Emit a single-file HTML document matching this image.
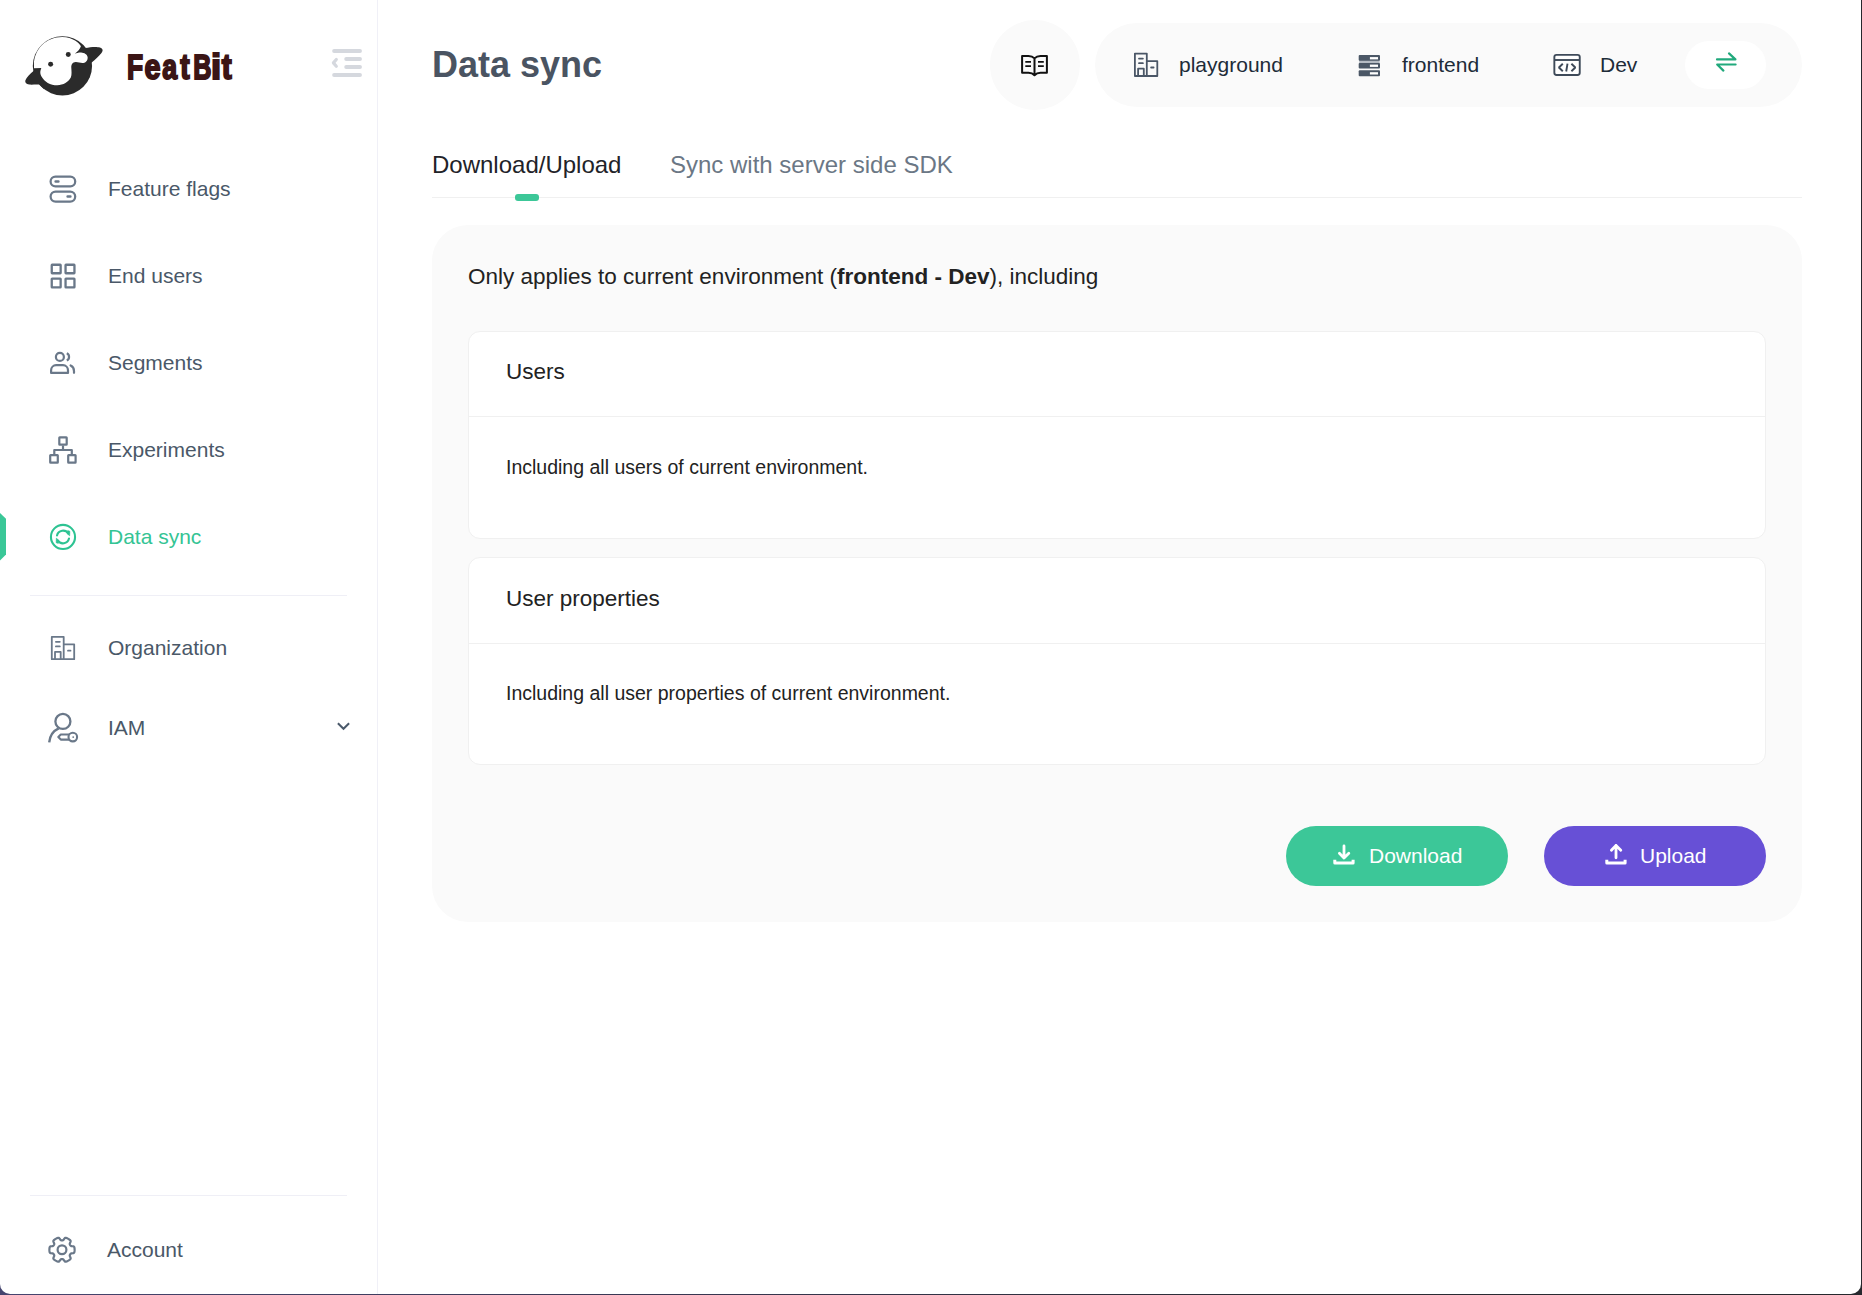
<!DOCTYPE html>
<html lang="en">
<head>
<meta charset="utf-8">
<title>FeatBit - Data sync</title>
<style>
*{box-sizing:border-box;margin:0;padding:0}
html,body{width:1862px;height:1295px;overflow:hidden;background:#2b2d34}
body{background:linear-gradient(90deg,#46456f 0%,#3d3c5c 25%,#34344a 45%,#2a2c34 70%,#26282d 100%);font-family:"Liberation Sans",sans-serif;color:#23282e;position:relative}
.abs{position:absolute}
/* sidebar */
#side{position:absolute;left:0;top:0;width:378px;height:1294px;border-right:1px solid #f0f0f7}
.mi{position:absolute;left:0;width:376px;height:60px;font-size:21px;line-height:60px;color:#4a5868}
.mi svg{position:absolute;left:47px;top:14px;width:32px;height:32px}
.mi span{position:absolute;left:108px;top:0;white-space:nowrap}
.mi.act{color:#34c494}
.hr{position:absolute;left:30px;width:317px;height:1px;background:#efeff6}
#actbar{position:absolute;left:0;top:513px;width:6px;height:47.6px;background:#3ac797;clip-path:polygon(0 0,100% 5.7px,100% calc(100% - 6px),0 100%)}
#win{position:absolute;left:0;top:0;width:1861px;height:1294px;background:#fff;border-radius:0 0 10px 10px}
/* header */
#title{position:absolute;left:432px;top:41px;font-size:36px;line-height:48px;font-weight:bold;color:#4a5462;white-space:nowrap}
#doc{position:absolute;left:990px;top:20px;width:90px;height:90px;border-radius:45px;background:#fafafa}
#pill{position:absolute;left:1095px;top:23px;width:707px;height:84px;border-radius:42px;background:#fafafa}
.pt{position:absolute;top:50px;font-size:21px;line-height:30px;color:#202b38;white-space:nowrap}
#swap{position:absolute;left:1685px;top:40.7px;width:81.2px;height:48.7px;border-radius:24.4px;background:#fff}
/* tabs */
.tab{position:absolute;top:148px;font-size:24px;line-height:34px;white-space:nowrap}
#tabline{position:absolute;left:432px;top:197px;width:1370px;height:1px;background:#f0f0f0}
#ink{position:absolute;left:515px;top:194px;width:24px;height:7px;border-radius:3px;background:#3cc798}
/* panel */
#panel{position:absolute;left:432px;top:225px;width:1370px;height:697px;border-radius:36px;background:#fafafa}
#lead{position:absolute;left:468px;top:260px;font-size:22.5px;line-height:34px;color:#222;white-space:nowrap}
.card{position:absolute;left:468px;width:1298px;height:208px;background:#fff;border:1px solid #f0f0f0;border-radius:12px}
.card h3{position:absolute;left:37px;top:23px;font-size:22.5px;line-height:34px;font-weight:normal;color:#222;white-space:nowrap}
.card .div{position:absolute;left:0;top:84px;width:1296px;height:1px;background:#f0f0f0}
.card p{position:absolute;left:37px;top:120px;font-size:19.5px;line-height:30px;color:#222;white-space:nowrap}
.btn{position:absolute;top:826px;width:222px;height:60px;border-radius:30px;color:#fff;font-size:21px;line-height:60px}
.btn span{position:absolute;top:0;white-space:nowrap}
.btn svg{position:absolute}
</style>
</head>
<body>
<div id="win"></div>
<div id="side">
  <svg id="brand" width="260" height="110" viewBox="0 0 260 110" style="position:absolute;left:0;top:0"><text y="78.7" font-family="Liberation Sans, sans-serif" font-weight="bold" font-size="35.2" fill="#3b1515" stroke="#3b1515" stroke-width="2.0" stroke-linejoin="miter"><tspan x="127.04" textLength="16.08" lengthAdjust="spacingAndGlyphs">F</tspan><tspan x="144.49" textLength="15.97" lengthAdjust="spacingAndGlyphs">e</tspan><tspan x="162.18" textLength="14.89" lengthAdjust="spacingAndGlyphs">a</tspan><tspan x="180.36" textLength="9.39" lengthAdjust="spacingAndGlyphs">t</tspan><tspan x="193.13" textLength="18.20" lengthAdjust="spacingAndGlyphs">B</tspan><tspan x="210.99" textLength="10.17" lengthAdjust="spacingAndGlyphs">i</tspan><tspan x="221.68" textLength="9.93" lengthAdjust="spacingAndGlyphs">t</tspan></text></svg>
  <div id="actbar"></div>
  <div class="mi" style="top:159px"><span>Feature flags</span></div>
  <div class="mi" style="top:246px"><span>End users</span></div>
  <div class="mi" style="top:333px"><span>Segments</span></div>
  <div class="mi" style="top:420px"><span>Experiments</span></div>
  <div class="mi act" style="top:507px"><span>Data sync</span></div>
  <div class="hr" style="top:595px"></div>
  <div class="mi" style="top:618px"><span>Organization</span></div>
  <div class="mi" style="top:698px"><span>IAM</span></div>
  <div class="hr" style="top:1195px"></div>
  <div class="mi" style="top:1220px"><span style="left:107px">Account</span></div>
</div>

<div id="title">Data sync</div>
<div id="doc"></div>
<div id="pill"></div>
<div class="pt" style="left:1179px">playground</div>
<div class="pt" style="left:1402px">frontend</div>
<div class="pt" style="left:1600px">Dev</div>
<div id="swap"></div>

<div class="tab" style="left:432px;color:#1f2329">Download/Upload</div>
<div class="tab" style="left:670px;color:#6b7785">Sync with server side SDK</div>
<div id="tabline"></div>
<div id="ink"></div>

<div id="panel"></div>
<div id="lead">Only applies to current environment (<b>frontend - Dev</b>), including</div>
<div class="card" style="top:331px"><h3>Users</h3><div class="div"></div><p>Including all users of current environment.</p></div>
<div class="card" style="top:557px"><h3 style="top:24px">User properties</h3><div class="div" style="top:85px"></div><p>Including all user properties of current environment.</p></div>

<div class="btn" style="left:1286px;background:#3cc798"><span style="left:83px">Download</span></div>
<div class="btn" style="left:1544px;background:#6750d6"><span style="left:96px">Upload</span></div>
<svg id="icons" width="1862" height="1295" viewBox="0 0 1862 1295" style="position:absolute;left:0;top:0;pointer-events:none" fill="none" stroke-linecap="round" stroke-linejoin="round">
<!-- logo bird -->
<g transform="translate(20,30) scale(0.054054)">
  <circle cx="785" cy="664" r="548" fill="#2b2b2b"/>
  <path fill="#2b2b2b" d="M1130,250 L1210,332 C1300,315 1420,303 1480,325 C1535,345 1545,385 1500,435 C1460,480 1400,545 1320,605 L1150,700 Z"/>
  <path fill="#2b2b2b" d="M255,755 C190,810 120,880 100,930 C88,970 110,1002 170,1010 C230,1016 300,1003 352,1010 L450,1100 L420,700 Z"/>
  <path fill="#fff" d="M780,130 C480,130 258,360 258,640 L260,706 L394,703 C372,760 366,800 392,850 C450,960 560,1022 690,1022 C800,1022 900,960 940,880 C962,830 952,760 949,700 C946,640 972,596 1030,593 C1080,591 1120,616 1172,610 C1232,600 1256,550 1251,500 C1246,450 1190,420 1130,415 C1090,412 1050,425 1012,440 C1070,400 1110,350 1127,300 C1100,250 980,130 780,130 Z"/>
  <circle cx="893" cy="452" r="46" fill="#2b2b2b"/>
  <circle cx="567" cy="632" r="46" fill="#2b2b2b"/>
</g>
<!-- collapse -->
<g stroke="#d5d8de" stroke-width="3.9">
  <path d="M334.1,51H360 M346.2,59H360 M346.2,67H360 M334.1,75H360"/>
  <path d="M336.3,59.5 L333.4,62.9 L336.3,66.3" stroke-width="3.2"/>
</g>
<!-- feature flags -->
<g stroke="#6a7889" stroke-width="2.25">
  <rect x="50.6" y="176.6" width="24.6" height="9.7" rx="4.85"/>
  <rect x="50.6" y="191.6" width="24.6" height="10" rx="5"/>
  <path d="M55.6,181.5H58.4 M67.6,196.6H70.4" stroke-width="2.5"/>
</g>
<!-- end users -->
<g stroke="#6a7889" stroke-width="2.3" stroke-linejoin="round">
  <rect x="51.75" y="264.75" width="8.9" height="8.5" rx="0.4"/>
  <rect x="65.55" y="264.75" width="8.9" height="8.5" rx="0.4"/>
  <rect x="51.75" y="278.55" width="8.9" height="8.9" rx="0.4"/>
  <rect x="65.55" y="278.55" width="8.9" height="8.9" rx="0.4"/>
</g>
<!-- segments -->
<g stroke="#6a7889" stroke-width="2.2">
  <circle cx="59.9" cy="356.9" r="4"/>
  <path d="M66.8,353.3 A4,4 0 0 1 66.8,360.5" stroke-linecap="butt"/>
  <path d="M51.1,372.9 V370.2 A5,5 0 0 1 56.1,365.2 H63 A5,5 0 0 1 68,370.2 V372.9 Z"/>
  <path d="M70.6,365.5 C73,366.6 74,368.6 74,371 V372.8"/>
</g>
<!-- experiments -->
<g stroke="#6a7889" stroke-width="2.2">
  <rect x="59.3" y="437.4" width="7.4" height="7.3" rx="0.4"/>
  <rect x="50.2" y="455.2" width="7.6" height="7.4" rx="0.4"/>
  <rect x="68.2" y="455.2" width="7.4" height="7.4" rx="0.4"/>
  <path d="M63,445.6V450 M54.3,455V450H71.8V455" stroke-linecap="butt"/>
</g>
<!-- data sync -->
<g stroke="#2dc392" stroke-width="2.1">
  <circle cx="63" cy="536.9" r="12.05"/>
  <path d="M57.0,535.4 A6.2,6.2 0 0 1 68.3,533.6" stroke-linecap="round"/>
  <path d="M69.0,538.6 A6.2,6.2 0 0 1 57.7,540.4" stroke-linecap="round"/>
  <path d="M67.9,530.6 L69.9,531.3 L69.7,535.9 L68.2,534.6Z" fill="#2dc392" stroke-width="0.5"/>
  <path d="M58.1,543.4 L56.1,542.7 L56.3,538.1 L57.8,539.4Z" fill="#2dc392" stroke-width="0.5"/>
</g>
<!-- organization -->
<g stroke="#6a7889" stroke-width="1.8">
  <path d="M51.8,636.8H63.7V659.2H51.8Z M63.7,644.3H74.2V659.2H63.7"/>
  <path d="M55.9,641.8H59.8 M55.9,646.4H59.8 M68,650.7H70.5"/>
  <path d="M55,659V651.9H60.7V659"/>
</g>
<!-- IAM -->
<g stroke="#6a7889" stroke-width="2.3">
  <circle cx="62.9" cy="721.4" r="7.5"/>
  <path d="M58.7,728.4 C53,731 49.8,736.5 49.2,742.4" stroke-linecap="butt" stroke-width="2.4"/>
  <path d="M69.2,734.5H60.8L58.3,737L60.8,739.6H69.2" stroke-width="2.1"/>
  <circle cx="72.8" cy="737.1" r="4.3" stroke-width="2.1" fill="#fff"/>
  <circle cx="73.2" cy="737.1" r="0.9" fill="#6a7889" stroke="none"/>
</g>
<path d="M337.9,723.2 L343.5,728.8 L349.1,723.2" stroke="#4b5a6b" stroke-width="2" stroke-linecap="butt" stroke-linejoin="miter"/>
<!-- account gear -->
<g stroke="#6a7889" stroke-width="2.2">
  <path d="M74.60,1249.75 L74.59,1250.19 L74.57,1250.63 L74.53,1251.07 L74.47,1251.50 L74.39,1251.93 L74.26,1252.36 L74.03,1252.75 L73.55,1253.06 L72.72,1253.23 L71.79,1253.31 L71.13,1253.44 L70.75,1253.64 L70.50,1253.90 L70.31,1254.17 L70.14,1254.45 L69.98,1254.74 L69.84,1255.04 L69.75,1255.38 L69.76,1255.81 L69.98,1256.45 L70.38,1257.29 L70.65,1258.10 L70.61,1258.67 L70.39,1259.06 L70.08,1259.39 L69.75,1259.67 L69.40,1259.94 L69.05,1260.20 L68.68,1260.44 L68.30,1260.66 L67.92,1260.87 L67.52,1261.07 L67.12,1261.26 L66.72,1261.43 L66.30,1261.57 L65.87,1261.67 L65.42,1261.67 L64.91,1261.41 L64.34,1260.78 L63.81,1260.01 L63.37,1259.50 L63.00,1259.27 L62.66,1259.19 L62.33,1259.16 L62.00,1259.15 L61.67,1259.16 L61.34,1259.19 L61.00,1259.27 L60.63,1259.50 L60.19,1260.01 L59.66,1260.78 L59.09,1261.41 L58.58,1261.67 L58.13,1261.67 L57.70,1261.57 L57.28,1261.43 L56.88,1261.26 L56.48,1261.07 L56.08,1260.87 L55.70,1260.66 L55.32,1260.44 L54.95,1260.20 L54.60,1259.94 L54.25,1259.67 L53.92,1259.39 L53.61,1259.06 L53.39,1258.67 L53.35,1258.10 L53.62,1257.29 L54.02,1256.45 L54.24,1255.81 L54.25,1255.38 L54.16,1255.04 L54.02,1254.74 L53.86,1254.45 L53.69,1254.17 L53.50,1253.90 L53.25,1253.64 L52.87,1253.44 L52.21,1253.31 L51.28,1253.23 L50.45,1253.06 L49.97,1252.75 L49.74,1252.36 L49.61,1251.93 L49.53,1251.50 L49.47,1251.07 L49.43,1250.63 L49.41,1250.19 L49.40,1249.75 L49.41,1249.31 L49.43,1248.87 L49.47,1248.43 L49.53,1248.00 L49.61,1247.57 L49.74,1247.14 L49.97,1246.75 L50.45,1246.44 L51.28,1246.27 L52.21,1246.19 L52.87,1246.06 L53.25,1245.86 L53.50,1245.60 L53.69,1245.33 L53.86,1245.05 L54.02,1244.76 L54.16,1244.46 L54.25,1244.12 L54.24,1243.69 L54.02,1243.05 L53.62,1242.21 L53.35,1241.40 L53.39,1240.83 L53.61,1240.44 L53.92,1240.11 L54.25,1239.83 L54.60,1239.56 L54.95,1239.30 L55.32,1239.06 L55.70,1238.84 L56.08,1238.63 L56.48,1238.43 L56.88,1238.24 L57.28,1238.07 L57.70,1237.93 L58.13,1237.83 L58.58,1237.83 L59.09,1238.09 L59.66,1238.72 L60.19,1239.49 L60.63,1240.00 L61.00,1240.23 L61.34,1240.31 L61.67,1240.34 L62.00,1240.35 L62.33,1240.34 L62.66,1240.31 L63.00,1240.23 L63.37,1240.00 L63.81,1239.49 L64.34,1238.72 L64.91,1238.09 L65.42,1237.83 L65.87,1237.83 L66.30,1237.93 L66.72,1238.07 L67.12,1238.24 L67.52,1238.43 L67.92,1238.63 L68.30,1238.84 L68.68,1239.06 L69.05,1239.30 L69.40,1239.56 L69.75,1239.83 L70.08,1240.11 L70.39,1240.44 L70.61,1240.83 L70.65,1241.40 L70.38,1242.21 L69.98,1243.05 L69.76,1243.69 L69.75,1244.12 L69.84,1244.46 L69.98,1244.76 L70.14,1245.05 L70.31,1245.33 L70.50,1245.60 L70.75,1245.86 L71.13,1246.06 L71.79,1246.19 L72.72,1246.27 L73.55,1246.44 L74.03,1246.75 L74.26,1247.14 L74.39,1247.57 L74.47,1248.00 L74.53,1248.43 L74.57,1248.87 L74.59,1249.31Z"/>
  <circle cx="62" cy="1249.75" r="4.4"/>
</g>
<!-- doc -->
<g stroke="#111" stroke-width="2">
  <path d="M1034.5,58.4 C1033,56.8 1031,56 1028.5,56 H1022.1 V72.8 H1028.5 C1031,72.8 1033,73.6 1034.5,75.2 C1036,73.6 1038,72.8 1040.5,72.8 H1046.9 V56 H1040.5 C1038,56 1036,56.8 1034.5,58.4 Z M1034.5,58.4V75"/>
  <path d="M1025.3,61.9H1031 M1025.3,66.1H1031 M1038,61.9H1043.8 M1038,66.1H1043.8" stroke-width="1.7" stroke-linecap="butt"/>
</g>
<!-- header org -->
<g stroke="#4a5666" stroke-width="1.8" transform="translate(1083.1,-583.2)">
  <path d="M51.8,636.8H63.7V659.2H51.8Z M63.7,644.3H74.2V659.2H63.7"/>
  <path d="M55.9,641.8H59.8 M55.9,646.4H59.8 M68,650.7H70.5"/>
  <path d="M55,659V651.9H60.7V659"/>
</g>
<!-- project -->
<g stroke="none">
  <rect x="1359.2" y="60" width="20.4" height="3.6" fill="#b5bbc3"/>
  <rect x="1358.7" y="55.1" width="21.3" height="5.7" rx="1" fill="#4b5766"/>
  <rect x="1358.7" y="63" width="21.3" height="5.6" rx="1" fill="#4b5766"/>
  <rect x="1358.7" y="70.3" width="21.3" height="6" rx="1" fill="#4b5766"/>
  <rect x="1369.9" y="57.1" width="8.1" height="2.3" fill="#fff"/>
  <rect x="1369.9" y="64.6" width="8.1" height="2.3" fill="#fff"/>
  <rect x="1369.9" y="72.2" width="8.1" height="2.3" fill="#fff"/>
</g>
<!-- env -->
<g stroke="#3e4a59" stroke-width="1.9">
  <rect x="1554.35" y="54.85" width="25.4" height="20.1" rx="2.2" fill="#fff"/>
  <path d="M1554.4,60H1579.7" stroke-linecap="butt"/>
  <path d="M1562.8,63.7 L1558.9,67.5 L1562.8,71.3 M1567.5,63.6 L1566.2,71.5 M1571.4,63.7 L1575.3,67.5 L1571.4,71.3" stroke-linecap="butt" stroke-linejoin="bevel"/>
</g>
<!-- swap -->
<g stroke="#21a97c" stroke-width="2.2">
  <path d="M1717,59.4H1735.4L1729,53.4 M1735.6,64.5H1717.2L1723.4,70.6"/>
</g>
<!-- download -->
<g stroke="#fff" stroke-width="2.8">
  <path d="M1344,846V858 M1339.4,853.2 L1344,858.1 L1348.8,853.2"/>
  <path d="M1334.8,859.8V863H1353.1V859.8" stroke-width="3" stroke-linecap="butt"/>
</g>
<!-- upload -->
<g stroke="#fff" stroke-width="2.8">
  <path d="M1616,845.5V857.8 M1611.4,850.3 L1616,845.4 L1620.8,850.3"/>
  <path d="M1606.8,859.8V863H1625.1V859.8" stroke-width="3" stroke-linecap="butt"/>
</g>
</svg>
</body>
</html>
